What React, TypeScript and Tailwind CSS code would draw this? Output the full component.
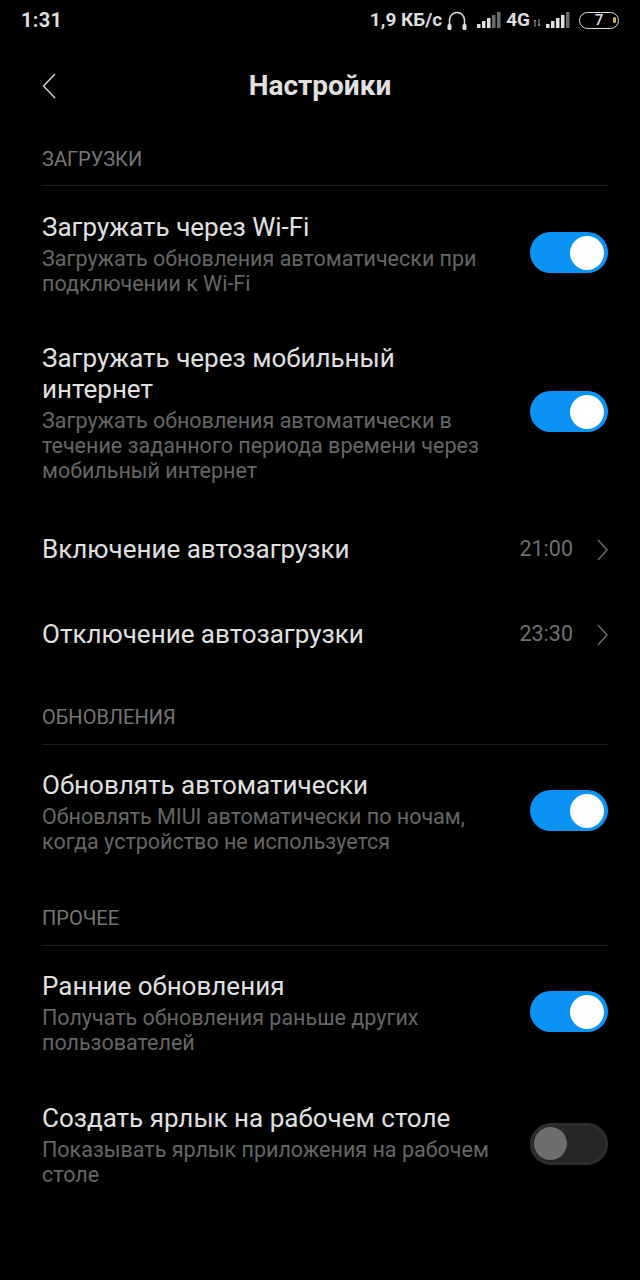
function Toggle({ on = true }: { on?: boolean }) {
  if (!on) {
    return (
      <div className="w-[78px] h-[42px] mb-[3px] shrink-0 rounded-full bg-[#262626] border-[3px] border-[#2e2e2e] flex items-center justify-start">
        <div className="w-[33px] h-[33px] rounded-full bg-[#6e6e6e] ml-[1px]" />
      </div>
    );
  }
  return (
    <div className="w-[78px] h-[41px] mb-[3px] shrink-0 rounded-full bg-[#0a93f5] flex items-center justify-end pr-[4px]">
      <div className="w-[34px] h-[34px] rounded-full bg-white" />
    </div>
  );
}

function Section({ title, first, children }: { title: string; first?: boolean; children: React.ReactNode }) {
  return (
    <section>
      <div
        className={
          first
            ? 'ml-[42px] mr-[32px] mb-[3px] border-b border-[#1f1f1f] h-[39px] text-[20px] leading-[25px] text-[#757575]'
            : 'ml-[42px] mr-[32px] mb-[2px] border-b border-[#1f1f1f] h-[40px] text-[20px] leading-[25px] text-[#757575]'
        }
      >
        {title}
      </div>
      {children}
    </section>
  );
}

function ToggleRow({ title, sub, on = true }: { title: string; sub: string; on?: boolean }) {
  return (
    <div className="flex items-center justify-between pl-[42px] pr-[32px] pt-[23px] pb-[24px]">
      <div className="w-[450px]">
        <div className="text-[26px] leading-[31px] text-[#e0e0e0]">{title}</div>
        <div className="text-[21.5px] leading-[25px] text-[#666666] mt-[3px]">{sub}</div>
      </div>
      <Toggle on={on} />
    </div>
  );
}

function TimeRow({ title, time }: { title: string; time: string }) {
  return (
    <div className="h-[85px] flex items-center justify-between pl-[42px] pr-[32px]">
      <div className="text-[26px] text-[#e0e0e0]">{title}</div>
      <div className="flex items-center gap-[24px]">
        <span className="text-[21.5px] text-[#6f6f6f]">{time}</span>
        <svg width="11" height="22" viewBox="0 0 11 22" fill="none">
          <path d="M1 1l9 10-9 10" stroke="#6f6f6f" strokeWidth="1.4" />
        </svg>
      </div>
    </div>
  );
}

function Signal({ strong }: { strong: number }) {
  const bars = [4, 7, 10, 13, 16];
  return (
    <svg width="24" height="16" viewBox="0 0 24 16">
      {bars.map((h, i) => (
        <rect key={i} x={i * 5} y={16 - h} width="3.500" height={h} fill={i < strong ? '#e0e0e0' : '#6a6a6a'} />
      ))}
    </svg>
  );
}

export default function App() {
  return (
    <div className="w-[640px] h-[1280px] bg-black overflow-hidden font-['Roboto',sans-serif]">
      <div className="h-[40px] flex items-center justify-between pl-[21px] pr-[21px] text-[#dddddd]">
        <span className="text-[20px] font-bold tracking-[0.3px]">1:31</span>
        <div className="flex items-center text-[19px] font-bold">
          <span>1,9 КБ/с</span>
          <svg width="20" height="19" viewBox="0 0 20 19" fill="none" className="ml-[5px] mr-[10px]">
            <path d="M2.500 14V9a7.500 7.500 0 0 1 15 0v5" stroke="#e0e0e0" strokeWidth="1.500" />
            <rect x="0.500" y="13" width="4" height="6" rx="1.500" fill="#e0e0e0" />
            <rect x="15.500" y="13" width="4" height="6" rx="1.500" fill="#e0e0e0" />
          </svg>
          <Signal strong={3} />
          <span className="ml-[5px]">4G</span>
          <svg width="8" height="10" viewBox="0 0 8 10" className="ml-[3px] mr-[5px] mt-[5px]">
            <path d="M2 9V2M1 3.500L2 2l1 1.500M6 1v7M5 6.500L6 8l1-1.500" stroke="#aaaaaa" strokeWidth="0.9" fill="none" />
          </svg>
          <Signal strong={4} />
          <div className="relative ml-[9px] w-[40px] h-[17px] rounded-full border-[1.5px] border-[#dddddd] flex items-center justify-center text-[15px] font-medium leading-none">
            7
            <span className="absolute right-[2px] top-[4px] w-[3px] h-[6px] rounded-full bg-[#d9b44a]" />
          </div>
        </div>
      </div>

      <header className="relative h-[107px] flex justify-center pt-[28px]">
        <svg width="14" height="26" viewBox="0 0 14 26" fill="none" className="absolute left-[42px] top-[33px]">
          <path d="M13 1L1.500 13 13 25" stroke="#cfcfcf" strokeWidth="1.500" />
        </svg>
        <h1 className="text-[28px] leading-[36px] font-bold text-[#e0e0e0]">Настройки</h1>
      </header>

      <Section title="ЗАГРУЗКИ" first>
        <ToggleRow title="Загружать через Wi-Fi" sub="Загружать обновления автоматически при подключении к Wi-Fi" />
        <ToggleRow title="Загружать через мобильный интернет" sub="Загружать обновления автоматически в течение заданного периода времени через мобильный интернет" />
        <TimeRow title="Включение автозагрузки" time="21:00" />
        <TimeRow title="Отключение автозагрузки" time="23:30" />
      </Section>
      <div className="h-[28px]" />
      <Section title="ОБНОВЛЕНИЯ">
        <ToggleRow title="Обновлять автоматически" sub="Обновлять MIUI автоматически по ночам, когда устройство не используется" />
      </Section>
      <div className="h-[28px]" />
      <Section title="ПРОЧЕЕ">
        <ToggleRow title="Ранние обновления" sub="Получать обновления раньше других пользователей" />
        <div className="h-[1px]" />
        <ToggleRow title="Создать ярлык на рабочем столе" sub="Показывать ярлык приложения на рабочем столе" on={false} />
      </Section>
    </div>
  );
}
